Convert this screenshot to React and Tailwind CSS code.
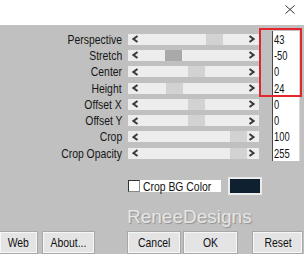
const ROWS = [
  { label: 'Perspective', value: '43', thumb: 78 },
  { label: 'Stretch', value: '-50', thumb: 37, active: true },
  { label: 'Center', value: '0', thumb: 60 },
  { label: 'Height', value: '24', thumb: 38 },
  { label: 'Offset X', value: '0', thumb: 60 },
  { label: 'Offset Y', value: '0', thumb: 60 },
  { label: 'Crop', value: '100', thumb: 102 },
  { label: 'Crop Opacity', value: '255', thumb: 102 },
];

const FONT = "font-['Liberation_Sans',Arial,sans-serif]";

function Chevron({ dir }) {
  return (
    <svg width="7" height="8" viewBox="0 0 7 8" className="shrink-0">
      <polyline
        points={dir === 'left' ? '5.5,1 1.5,4 5.5,7' : '1.5,1 5.5,4 1.5,7'}
        fill="none"
        stroke="#3a3a3a"
        strokeWidth="2"
      />
    </svg>
  );
}

function Btn({ children, className }) {
  return (
    <button
      className={`h-[21px] bg-[#e4e4e4] border border-[#f7f7f7] shadow-[0_0_0_1px_#a8a8a8] flex items-center justify-center text-[#111] ${className}`}
    >
      <span className="text-[13px] inline-block scale-x-[0.8]">{children}</span>
    </button>
  );
}

export default function App() {
  return (
    <div className={`w-[304px] h-[254px] flex flex-col overflow-hidden ${FONT}`}>
      <div className="h-[25px] bg-white flex items-start justify-end pr-[9px] pt-[5px] shrink-0">
        <svg width="10" height="9" viewBox="0 0 10 9">
          <path d="M0.5 0.5 L9.5 8.5 M9.5 0.5 L0.5 8.5" stroke="#333" strokeWidth="1" fill="none" />
        </svg>
      </div>

      <div className="relative flex-1 bg-[#c0c0c0] flex flex-col pt-[6px]">
        <div className="flex flex-col">
          {ROWS.map(({ label, value, thumb, active }) => (
            <div key={label} className="h-[16.3px] flex items-center">
              <div className="w-[122px] text-right text-[13px] leading-none text-[#161616]">
                <span className="inline-block scale-x-[0.8] origin-right">{label}</span>
              </div>
              <div className="relative ml-[6px] w-[131px] h-[11px] bg-[#ededed] flex items-center justify-between px-[4px]">
                <div
                  className={`absolute top-0 h-[11px] w-[17px] ${active ? 'bg-[#a9a9a9]' : 'bg-[#d2d2d2]'}`}
                  style={{ left: thumb }}
                />
                <Chevron dir="left" />
                <Chevron dir="right" />
              </div>
              <div className="ml-[13px] w-[28px] self-stretch bg-white border-l border-[#4a4a4a] border-r border-r-[#d8d8d8] flex items-center pl-[1px]">
                <span className="text-[13px] leading-none text-[#111] inline-block scale-x-[0.72] origin-left">
                  {value}
                </span>
              </div>
            </div>
          ))}
        </div>

        <div className="mt-[16px] h-[18px] flex items-center pl-[128px]">
          <div className="w-[12px] h-[12px] bg-white border border-[#333] border-r-[#888] border-b-[#888]" />
          <div className="h-[12px] w-[81px] bg-white flex items-center pl-[3px] text-[13px] leading-none text-[#111]">
            <span className="inline-block scale-x-[0.8] origin-left whitespace-nowrap">Crop BG Color</span>
          </div>
          <div className="ml-[7px] w-[34px] h-[18px] bg-[#0f2131] border-2 border-[#ececec]" />
        </div>

        <div className="mt-[10px] h-[24px] pl-[127px] text-[19px] leading-[24px] text-[#e6e6e6] [text-shadow:1px_1px_1px_#8f8f8f]">
          ReneeDesigns
        </div>

        <div className="mt-[3px] flex items-center">
          <Btn className="w-[37px]">Web</Btn>
          <Btn className="ml-[6px] w-[51px]">About...</Btn>
          <Btn className="ml-[34px] w-[52px]">Cancel</Btn>
          <Btn className="ml-[4px] w-[53px]">OK</Btn>
          <Btn className="ml-[16px] w-[49px]">Reset</Btn>
        </div>

        <div className="absolute left-[259px] top-[3px] w-[43px] h-[69px] border-2 border-[#e2262b]" />
      </div>
    </div>
  );
}
